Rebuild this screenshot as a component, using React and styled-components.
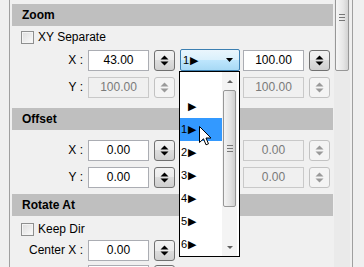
import styled, { createGlobalStyle } from "styled-components";

const GlobalStyle = createGlobalStyle`
  html, body {
    margin: 0;
    padding: 0;
    background: #f0f0f0;
  }
  body {
    font-family: "Liberation Sans", Arial, sans-serif;
    font-size: 12px;
    color: #000;
  }
`;

const Window = styled.div`
  position: relative;
  width: 364px;
  height: 267px;
  display: flex;
  overflow: hidden;
  background: #f0f0f0;
`;

const LeftEdge = styled.div`
  width: 9px;
  flex: none;
  border-right: 1px solid #a0a0a0;
`;

const Panel = styled.div`
  width: 324px;
  flex: none;
  padding: 0 1px 0 2px;
  box-sizing: border-box;
  display: flex;
  flex-direction: column;
`;

const SectionHeader = styled.div`
  height: 22px;
  flex: none;
  margin-top: ${(p) => p.$top}px;
  background: #bfbfbf;
  padding-left: 10px;
  line-height: 22px;
  font-weight: bold;
`;

const CheckRow = styled.label`
  display: flex;
  align-items: center;
  gap: 4px;
  height: 14px;
  padding: ${(p) => p.$pad}px 0 0 9px;
  box-sizing: content-box;
  flex: none;
`;

const CheckBox = styled.span`
  width: 13px;
  height: 13px;
  box-sizing: border-box;
  border: 1px solid #8e8f8f;
  background: linear-gradient(135deg, #dcdcdc, #fbfbfb);
  box-shadow: inset 0 0 0 1px #f4f4f4;
`;

const Row = styled.div`
  display: flex;
  align-items: flex-start;
  height: 21px;
  margin-top: ${(p) => p.$top ?? 6}px;
  flex: none;
`;

const Label = styled.span`
  width: 71px;
  line-height: 21px;
  text-align: right;
  white-space: pre;
`;

const Field = styled.div`
  width: 61px;
  height: 21px;
  margin-left: ${(p) => p.$gap}px;
  box-sizing: border-box;
  border: 1px solid ${(p) => (p.$off ? "#c9c9c9" : "#abadb3")};
  background: ${(p) => (p.$off ? "#f0f0f0" : "#fff")};
  color: ${(p) => (p.$off ? "#7a7a7a" : "#000")};
  text-align: center;
  line-height: 19px;
`;

const Spin = styled.div`
  width: 21px;
  height: 21px;
  margin-left: 5px;
  box-sizing: border-box;
  border: 1px solid ${(p) => (p.$off ? "#c2c2c2" : "#707070")};
  border-radius: 3px;
  background: ${(p) =>
    p.$off
      ? "#f4f4f4"
      : "linear-gradient(#f2f2f2 0%, #ebebeb 50%, #dddddd 50%, #cfcfcf 100%)"};
  display: flex;
  align-items: center;
  justify-content: center;
`;

const Slot = styled.div`
  position: relative;
  width: 60px;
  height: 21px;
  margin-left: 5px;
  flex: none;
`;

const Combo = styled.div`
  height: 22px;
  margin-top: -1px;
  box-sizing: border-box;
  border: 1px solid #3c7fb1;
  border-radius: 2px;
  background: linear-gradient(#eaf6fd 0%, #d9f0fc 50%, #bee6fd 50%, #a7d9f5 100%);
  display: flex;
  align-items: center;
  padding: 0 6px 0 2px;
  justify-content: space-between;
`;

const Num = styled.span`
  display: inline-flex;
  align-items: center;
  font-size: 11px;
  line-height: 1;
`;

const Digit = styled.span`
  display: inline-block;
  width: 7px;
`;

const Tri = styled.span`
  font-family: "DejaVu Sans", sans-serif;
  font-size: 11px;
`;

const DropList = styled.div`
  position: absolute;
  z-index: 5;
  top: 21px;
  left: -1px;
  width: 61px;
  height: 186px;
  box-sizing: border-box;
  border: 1px solid #000;
  background: #fff;
  display: flex;
`;

const Items = styled.div`
  width: 42px;
  display: flex;
  flex-direction: column;
`;

const Item = styled.div`
  height: 23px;
  flex: none;
  display: flex;
  align-items: center;
  padding-left: 1px;
  background: ${(p) => (p.$hot ? "#3399ff" : "transparent")};
`;

const ListBar = styled.div`
  width: 15px;
  margin-right: 2px;
  background: #f4f4f4;
  display: flex;
  flex-direction: column;
  align-items: center;
`;

const BarArrow = styled.div`
  height: 18px;
  width: 100%;
  display: flex;
  align-items: center;
  justify-content: center;
  flex: none;
`;

const BarFill = styled.div`
  flex: 1;
`;

const ListThumb = styled.div`
  width: 13px;
  height: 117px;
  box-sizing: border-box;
  border: 1px solid #979797;
  border-radius: 2px;
  background: linear-gradient(90deg, #f3f3f3, #e2e2e2 60%, #cfcfcf);
  display: flex;
  align-items: center;
  justify-content: center;
`;

const Grip = styled.div`
  width: 6px;
  height: 5px;
  border-top: 1px solid #777;
  border-bottom: 1px solid #777;
  position: relative;
  &::after {
    content: "";
    position: absolute;
    left: 0;
    right: 0;
    top: 2px;
    border-top: 1px solid #777;
  }
`;

const MainBar = styled.div`
  width: 16px;
  flex: none;
  background: #eaeaea;
  display: flex;
  justify-content: center;
`;

const MainThumb = styled.div`
  width: 14px;
  height: 74px;
  margin-top: -3px;
  box-sizing: border-box;
  border: 1px solid #979797;
  border-radius: 2px;
  background: linear-gradient(90deg, #f6f6f6, #e6e6e6 60%, #d2d2d2);
  display: flex;
  justify-content: center;
  padding-top: 16px;
`;

const RightEdge = styled.div`
  flex: 1;
  margin-left: 2px;
  border-left: 1px solid #a0a0a0;
`;

const Cursor = styled.svg`
  position: absolute;
  z-index: 10;
  left: 199px;
  top: 126px;
`;

function Arrows({ off }) {
  const c = off ? "#9a9a9a" : "#000";
  return (
    <svg width="9" height="11" viewBox="0 0 9 11">
      <polygon points="0.5,4.5 4.5,0.5 8.5,4.5" fill={c} />
      <polygon points="0.5,6.5 8.5,6.5 4.5,10.5" fill={c} />
    </svg>
  );
}

function Caret({ up, w = 7, h = 4, color = "#000" }) {
  return (
    <svg width={w} height={h} viewBox={`0 0 ${w} ${h}`}>
      <polygon
        points={up ? `0,${h} ${w / 2},0 ${w},${h}` : `0,0 ${w},0 ${w / 2},${h}`}
        fill={color}
      />
    </svg>
  );
}

function Value({ num }) {
  return (
    <Num>
      <Digit>{num}</Digit>
      <Tri>▶</Tri>
    </Num>
  );
}

const listItems = ["", "", "1", "2", "3", "4", "5", "6"];

function DropDown() {
  return (
    <DropList>
      <Items>
        {listItems.map((n, i) => (
          <Item key={i} $hot={i === 2}>
            {i > 0 && <Value num={n} />}
          </Item>
        ))}
      </Items>
      <ListBar>
        <BarArrow>
          <Caret up w={6} h={3} color="#606060" />
        </BarArrow>
        <ListThumb>
          <Grip />
        </ListThumb>
        <BarFill />
        <BarArrow>
          <Caret w={6} h={3} color="#606060" />
        </BarArrow>
      </ListBar>
    </DropList>
  );
}

function NumRow({ label, value, top, children }) {
  return (
    <Row $top={top}>
      <Label>{label}</Label>
      <Field $gap={5}>{value}</Field>
      <Spin>
        <Arrows />
      </Spin>
      {children}
    </Row>
  );
}

function OffPair({ value, gap = 3 }) {
  return (
    <>
      <Field $off $gap={gap}>
        {value}
      </Field>
      <Spin $off>
        <Arrows off />
      </Spin>
    </>
  );
}

export default function App() {
  return (
    <Window>
      <GlobalStyle />
      <LeftEdge />
      <Panel>
        <SectionHeader $top={4}>Zoom</SectionHeader>
        <CheckRow $pad={4}>
          <CheckBox />
          XY Separate
        </CheckRow>
        <NumRow label="X :" value="43.00">
          <Slot>
            <Combo>
              <Value num="1" />
              <Caret />
            </Combo>
            <DropDown />
          </Slot>
          <Field $gap={3}>100.00</Field>
          <Spin>
            <Arrows />
          </Spin>
        </NumRow>
        <Row>
          <Label>{"Y :"}</Label>
          <Field $off $gap={5}>
            100.00
          </Field>
          <Spin $off>
            <Arrows off />
          </Spin>
          <Slot />
          <OffPair value="100.00" />
        </Row>

        <SectionHeader $top={10}>Offset</SectionHeader>
        <NumRow label="X :" value="0.00" top={10}>
          <Slot />
          <OffPair value="0.00" />
        </NumRow>
        <NumRow label="Y :" value="0.00">
          <Slot />
          <OffPair value="0.00" />
        </NumRow>

        <SectionHeader $top={6}>Rotate At</SectionHeader>
        <CheckRow $pad={6}>
          <CheckBox />
          Keep Dir
        </CheckRow>
        <NumRow label="Center X :" value="0.00" top={4} />
        <NumRow label="Center Y :" value="0.00" top={4} />
      </Panel>
      <MainBar>
        <MainThumb>
          <Grip />
        </MainThumb>
      </MainBar>
      <RightEdge />
      <Cursor width="13" height="20" viewBox="0 0 13 20">
        <path
          d="M0.5,0.5 L0.5,16.5 L4.5,12.8 L7,18.8 L9.5,17.8 L7,12 L12,12 Z"
          fill="#fff"
          stroke="#000"
          strokeWidth="1"
          strokeLinejoin="miter"
        />
      </Cursor>
    </Window>
  );
}
